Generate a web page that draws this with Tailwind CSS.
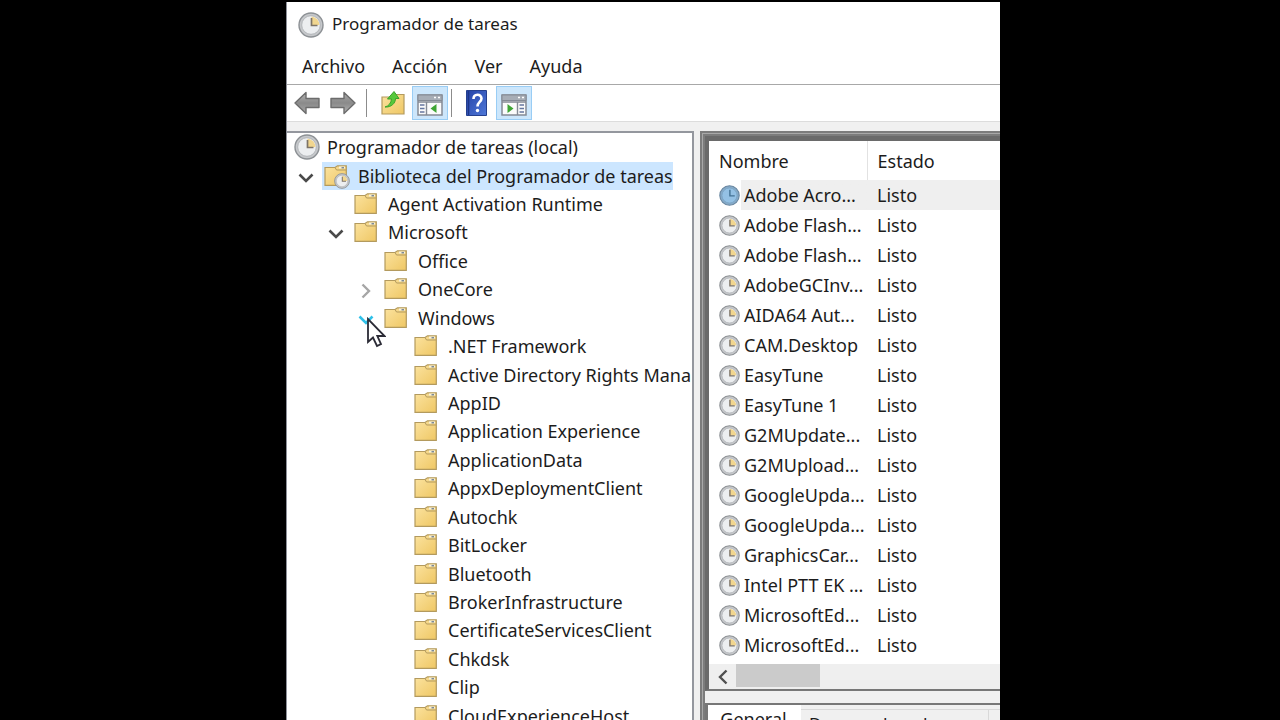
<!DOCTYPE html>
<html lang="es" class="bg-black">
<head>
  <meta charset="utf-8">
  <meta name="viewport" content="width=device-width,initial-scale=1">
  <title>Programador de tareas</title>
  <script src="https://cdn.jsdelivr.net/npm/@tailwindcss/browser@4"></script>
</head>
<body class="h-screen overflow-hidden bg-black pt-0.5 pl-[286px] pr-[280px] font-['Noto_Sans','Open_Sans',sans-serif] text-lg text-[#1c1c1c]">

  <!-- ───────── ICONS ─────────────────────────────────────────── -->
  <svg class="absolute size-0">
    <linearGradient id="gold" x1="0" y1="0" x2="1" y2="1">
      <stop offset="0" stop-color="#fbe3a0"/><stop offset="1" stop-color="#efc764"/>
    </linearGradient>
    <linearGradient id="grey" x1="0" y1="0" x2="0" y2="1">
      <stop offset="0" stop-color="#b4b4b4"/><stop offset=".5" stop-color="#8a8a8a"/><stop offset="1" stop-color="#a6a6a6"/>
    </linearGradient>
    <linearGradient id="blue" x1="0" y1="0" x2="1" y2="1">
      <stop offset="0" stop-color="#2443a8"/><stop offset="1" stop-color="#4f78d8"/>
    </linearGradient>
    <symbol id="clock" viewBox="0 0 26 26">
      <circle cx="13" cy="13" r="12" fill="#c6c8cb" stroke="#8d9195" stroke-width="1.4"/>
      <circle cx="13" cy="13" r="9.3" fill="#eceef0" stroke="#a9adb1" stroke-width=".8"/>
      <path d="M13.5 4.5A9 9 0 0 1 21.5 13H13.5Z" fill="#f1d68f"/>
      <path d="M13.5 6V13.5H19.500" fill="none" stroke="#7d7468" stroke-width="1.7"/>
    </symbol>
    <symbol id="clock-blue" viewBox="0 0 26 26">
      <circle cx="13" cy="13" r="12" fill="#86abc9" stroke="#6886a0" stroke-width="1.4"/>
      <circle cx="13" cy="13" r="9.3" fill="#94c1e4" stroke="#759fc0" stroke-width=".8"/>
      <path d="M13.5 6V13.5H19.5" fill="none" stroke="#437294" stroke-width="1.7"/>
    </symbol>
    <symbol id="folder" viewBox="0 0 24 22">
      <path d="M1 2.5H11L13.5.8H22.300V20.300H1Z" fill="url(#gold)" stroke="#b39a5e" stroke-width="1.2"/>
      <path d="M11 2.5L12.5 5H22" fill="none" stroke="#b39a5e"/>
      <path d="M15 1.5H21V3.5H15Z" fill="#f7f1dc"/>
      <path d="M17.5 2.7H20" stroke="#7c8a96" stroke-width="1.5"/>
    </symbol>
    <symbol id="down" viewBox="0 0 16 10">
      <path d="M1.5 1.5L8 8L14.5 1.5" fill="none" stroke="currentColor" stroke-width="2.6"/>
    </symbol>
    <symbol id="right" viewBox="0 0 10 16">
      <path d="M1.5 1.5L8 8L1.5 14.5" fill="none" stroke="currentColor" stroke-width="2.4"/>
    </symbol>
    <symbol id="arrow" viewBox="0 0 26 24">
      <path d="M1 12L12 1.5V7.5H25V16.5H12V22.5Z" fill="url(#grey)" stroke="#6c6c6c" stroke-width="1.4" stroke-linejoin="round"/>
    </symbol>
    <symbol id="pane" viewBox="0 0 26 22">
      <path d="M1 1H25V21H1Z" fill="#fbfbfb" stroke="#858b95" stroke-width="1.5"/>
      <path d="M1 1H25V6.5H1Z" fill="#a7adb6" stroke="#858b95"/>
      <path d="M17 3.5H19M21 3.5H23" stroke="#fff" stroke-width="1.5"/>
      <path d="M1 8H25M9.5 8V21" stroke="#858b95" stroke-width="1.4"/>
      <path d="M3 11H7.500M3 14.5H7.500M3 18H7.500" stroke="#6577a0" stroke-width="1.5"/>
    </symbol>
  </svg>

  <main class="flex h-full flex-col border-l border-[#8d9099] bg-white">

    <!-- ───────── TITLE + MENU ────────────────────────────────── -->
    <header class="flex h-[45px] shrink-0 items-center gap-2 pl-[11px]">
      <svg class="size-[26px]"><use href="#clock"/></svg>
      <h1 class="text-[17px]">Programador de tareas</h1>
    </header>
    <nav class="flex h-[38px] shrink-0 items-center gap-[27px] border-b border-[#a8a8a8] pl-[15px]">
      <button>Archivo</button>
      <button>Acción</button>
      <button>Ver</button>
      <button>Ayuda</button>
    </nav>

    <!-- ───────── TOOLBAR ─────────────────────────────────────── -->
    <div role="toolbar" class="flex h-[37px] shrink-0 items-center border-b border-[#dcdcdc] pl-[7px]">
      <button aria-label="Atrás"><svg class="h-6 w-[26px]"><use href="#arrow"/></svg></button>
      <button aria-label="Adelante" class="ml-2.5"><svg class="h-6 w-[26px] rotate-180"><use href="#arrow"/></svg></button>
      <span class="ml-2.5 h-7 w-px bg-[#8c8c8c]"></span>
      <button aria-label="Subir un nivel" class="ml-[13px]">
        <svg class="h-[26px] w-[26px]" viewBox="0 0 26 26">
          <path d="M2 7H13L15 4.5H24V24H2Z" fill="url(#gold)" stroke="#b39a5e" stroke-width="1.2"/>
          <path d="M5 17C9 16 11 13 11.5 9H7.500L14 1.5L19 8.5H15.500C15.5 13 11.5 17.5 5 17Z" fill="#57c83b" stroke="#38a32a"/>
        </svg>
      </button>
      <button aria-label="Mostrar árbol" class="ml-1.5 flex h-[34px] w-9 items-center justify-center border border-[#99cdf5] bg-[#cce6fb]">
        <svg class="mt-1 h-[22px] w-[26px]" viewBox="0 0 26 22"><use href="#pane"/><path d="M19.5 10V19L13.5 14.5Z" fill="#3fa535"/></svg>
      </button>
      <span class="ml-[3px] h-7 w-px bg-[#8c8c8c]"></span>
      <button aria-label="Ayuda" class="ml-3.5">
        <svg class="h-[26px] w-[21px]" viewBox="0 0 21 26">
          <path d="M.5.5H20.5V25.5H.5Z" fill="url(#blue)" stroke="#25408f"/>
          <path d="M2.5 1V25" stroke="#1d3688" stroke-width="1.5"/>
          <path d="M7.5 9C7.5 3.5 15.5 3.5 15.5 8.5C15.5 12 11.5 12 11.5 16.5" fill="none" stroke="#fff" stroke-width="2.6"/>
          <circle cx="11.5" cy="20.5" r="1.7" fill="#fff"/>
        </svg>
      </button>
      <button aria-label="Mostrar acciones" class="ml-[9px] flex h-[34px] w-9 items-center justify-center border border-[#99cdf5] bg-[#cce6fb]">
        <svg class="mt-1 h-[22px] w-[26px]" viewBox="0 0 26 22">
          <path d="M1 1H25V21H1Z" fill="#fbfbfb" stroke="#858b95" stroke-width="1.5"/>
          <path d="M1 1H25V6.5H1Z" fill="#a7adb6" stroke="#858b95"/>
          <path d="M17 3.5H19M21 3.5H23" stroke="#fff" stroke-width="1.5"/>
          <path d="M1 8H25M16.5 8V21" stroke="#858b95" stroke-width="1.4"/>
          <path d="M18.5 11H23M18.5 14.5H23M18.5 18H23" stroke="#6577a0" stroke-width="1.5"/>
          <path d="M6.5 10V19L12.5 14.5Z" fill="#3fa535"/>
        </svg>
      </button>
    </div>

    <div class="flex min-h-0 flex-1 bg-[#f0f0f0] pt-[9px]">
      <!-- ───────── TREE ──────────────────────────────────────── -->
      <section class="w-[407px] shrink-0 overflow-hidden border-t-2 border-r-2 border-[#94979e] bg-white">
        <ul id="tree" role="tree" class="grid h-[597px] auto-rows-fr"></ul>
      </section>

      <!-- ───────── TASK LIST ─────────────────────────────────── -->
      <section class="ml-1.5 flex min-w-0 flex-1 flex-col border-t-[5px] border-l-[5px] border-double border-[#7c7c7c] bg-[#a8a8a8]">
        <div class="shrink-0 border-t-[5px] border-l-4 border-b-2 border-t-[#6a6a6a] border-l-[#6a6a6a] border-b-[#777] bg-white">
          <table class="w-full table-fixed text-left">
            <thead>
              <tr class="h-[39px]">
                <th class="w-[158px] border-r border-[#e2e2e2] pl-2.5 font-normal">Nombre</th>
                <th class="pl-2.5 font-normal">Estado</th>
              </tr>
            </thead>
            <tbody id="tasks"></tbody>
          </table>
          <div class="mt-1 flex h-[25px] bg-[#efefef]">
            <button aria-label="Desplazar a la izquierda" class="flex w-[27px] items-center justify-center text-[#505050]">
              <svg class="h-4 w-2.5 rotate-180"><use href="#right"/></svg>
            </button>
            <span class="mb-0.5 w-[84px] bg-[#cbcbcb]"></span>
          </div>
        </div>
        <div class="h-3 shrink-0 bg-[#f0f0f0]"></div>
        <div class="flex min-h-0 flex-1 border-t-2 border-l-[3px] border-[#777] bg-[#f0f0f0] leading-6">
          <button class="h-7 w-[93px] shrink-0 bg-white pr-0.5">General</button>
          <button class="mt-1 h-7 w-[188px] shrink-0 border-t border-r border-[#d9d9d9] pl-2 text-left text-[17px]">Desencadenadores</button>
          <span class="mt-1 h-7 flex-1 border-t border-[#d9d9d9]"></span>
        </div>
      </section>
    </div>
  </main>

  <!-- mouse pointer -->
  <svg class="absolute top-[317px] left-[366px] h-[31px] w-5" viewBox="0 0 20 31">
    <path d="M2 2V25L7 20.5L11 29L15 27L11.300 19H18.500Z" fill="#fff" stroke="#2b2b36" stroke-width="1.8"/>
  </svg>

  <script>
/* ===== DATA ===== */
// [level, name, expander]
const TREE = [
  [0,'Programador de tareas (local)'],
  [1,'Biblioteca del Programador de tareas','open'],
  [2,'Agent Activation Runtime'],
  [2,'Microsoft','open'],
  [3,'Office'],
  [3,'OneCore','closed'],
  [3,'Windows','hover'],
  [4,'.NET Framework'],
  [4,'Active Directory Rights Mana'],
  [4,'AppID'],
  [4,'Application Experience'],
  [4,'ApplicationData'],
  [4,'AppxDeploymentClient'],
  [4,'Autochk'],
  [4,'BitLocker'],
  [4,'Bluetooth'],
  [4,'BrokerInfrastructure'],
  [4,'CertificateServicesClient'],
  [4,'Chkdsk'],
  [4,'Clip'],
  [4,'CloudExperienceHost'],
];
const TASKS = ['Adobe Acro...','Adobe Flash...','Adobe Flash...','AdobeGCInv...','AIDA64 Aut...',
  'CAM.Desktop','EasyTune','EasyTune 1','G2MUpdate...','G2MUpload...','GoogleUpda...',
  'GoogleUpda...','GraphicsCar...','Intel PTT EK ...','MicrosoftEd...','MicrosoftEd...'];

const INDENT = ['pl-[7px]','pl-[7px]','pl-[37px]','pl-[67px]','pl-[97px]'];
const EXPANDER = {
  open:   '<svg class="h-2.5 w-4 text-[#4a4a4a]"><use href="#down"/></svg>',
  closed: '<svg class="h-4 w-2.5 text-[#a6a6a6]"><use href="#right"/></svg>',
  hover:  '<svg class="h-2.5 w-4 text-[#2fc0e8]"><use href="#down"/></svg>',
};

/* ===== TREE ===== */
const treeIcon = level => {
  if(level===0) return '<svg class="size-[26px]"><use href="#clock"/></svg>';
  if(level===1) return `<svg class="h-[22px] w-6"><use href="#folder"/></svg>
    <svg class="absolute top-2 left-2.5 size-4"><use href="#clock"/></svg>`;
  return '<svg class="h-[22px] w-6"><use href="#folder"/></svg>';
};
document.querySelector('#tree').innerHTML = TREE.map(([level,name,exp])=>`
  <li role="treeitem" class="flex items-center whitespace-nowrap ${INDENT[level]}">
    ${level ? (exp ? `<button aria-label="${name}" class="flex w-6 justify-center pt-1">${EXPANDER[exp]}</button>`
                   : '<span class="w-6"></span>') : ''}
    <span class="flex h-7 items-center ${level===1 ? 'ml-1 bg-[#cce6ff] pl-0.5' : level ? 'ml-1 pl-0.5' : ''}">
      <span class="relative ${level ? 'w-[34px]' : 'w-[33px]'}">${treeIcon(level)}</span>${name}
    </span>
  </li>`).join('');

/* ===== TASKS ===== */
document.querySelector('#tasks').innerHTML = TASKS.map((name,i)=>`
  <tr class="h-[30px] ${i ? '' : 'bg-[#efefef]'}">
    <td class="pl-2.5 whitespace-nowrap ${i ? '' : 'bg-linear-to-r from-white from-20% to-[#efefef] to-20%'}">
      <span class="flex items-center gap-1">
        <svg class="size-[21px] shrink-0"><use href="${i ? '#clock' : '#clock-blue'}"/></svg>${name}
      </span>
    </td>
    <td class="pl-2.5">Listo</td>
  </tr>`).join('');
  </script>
</body>
</html>
